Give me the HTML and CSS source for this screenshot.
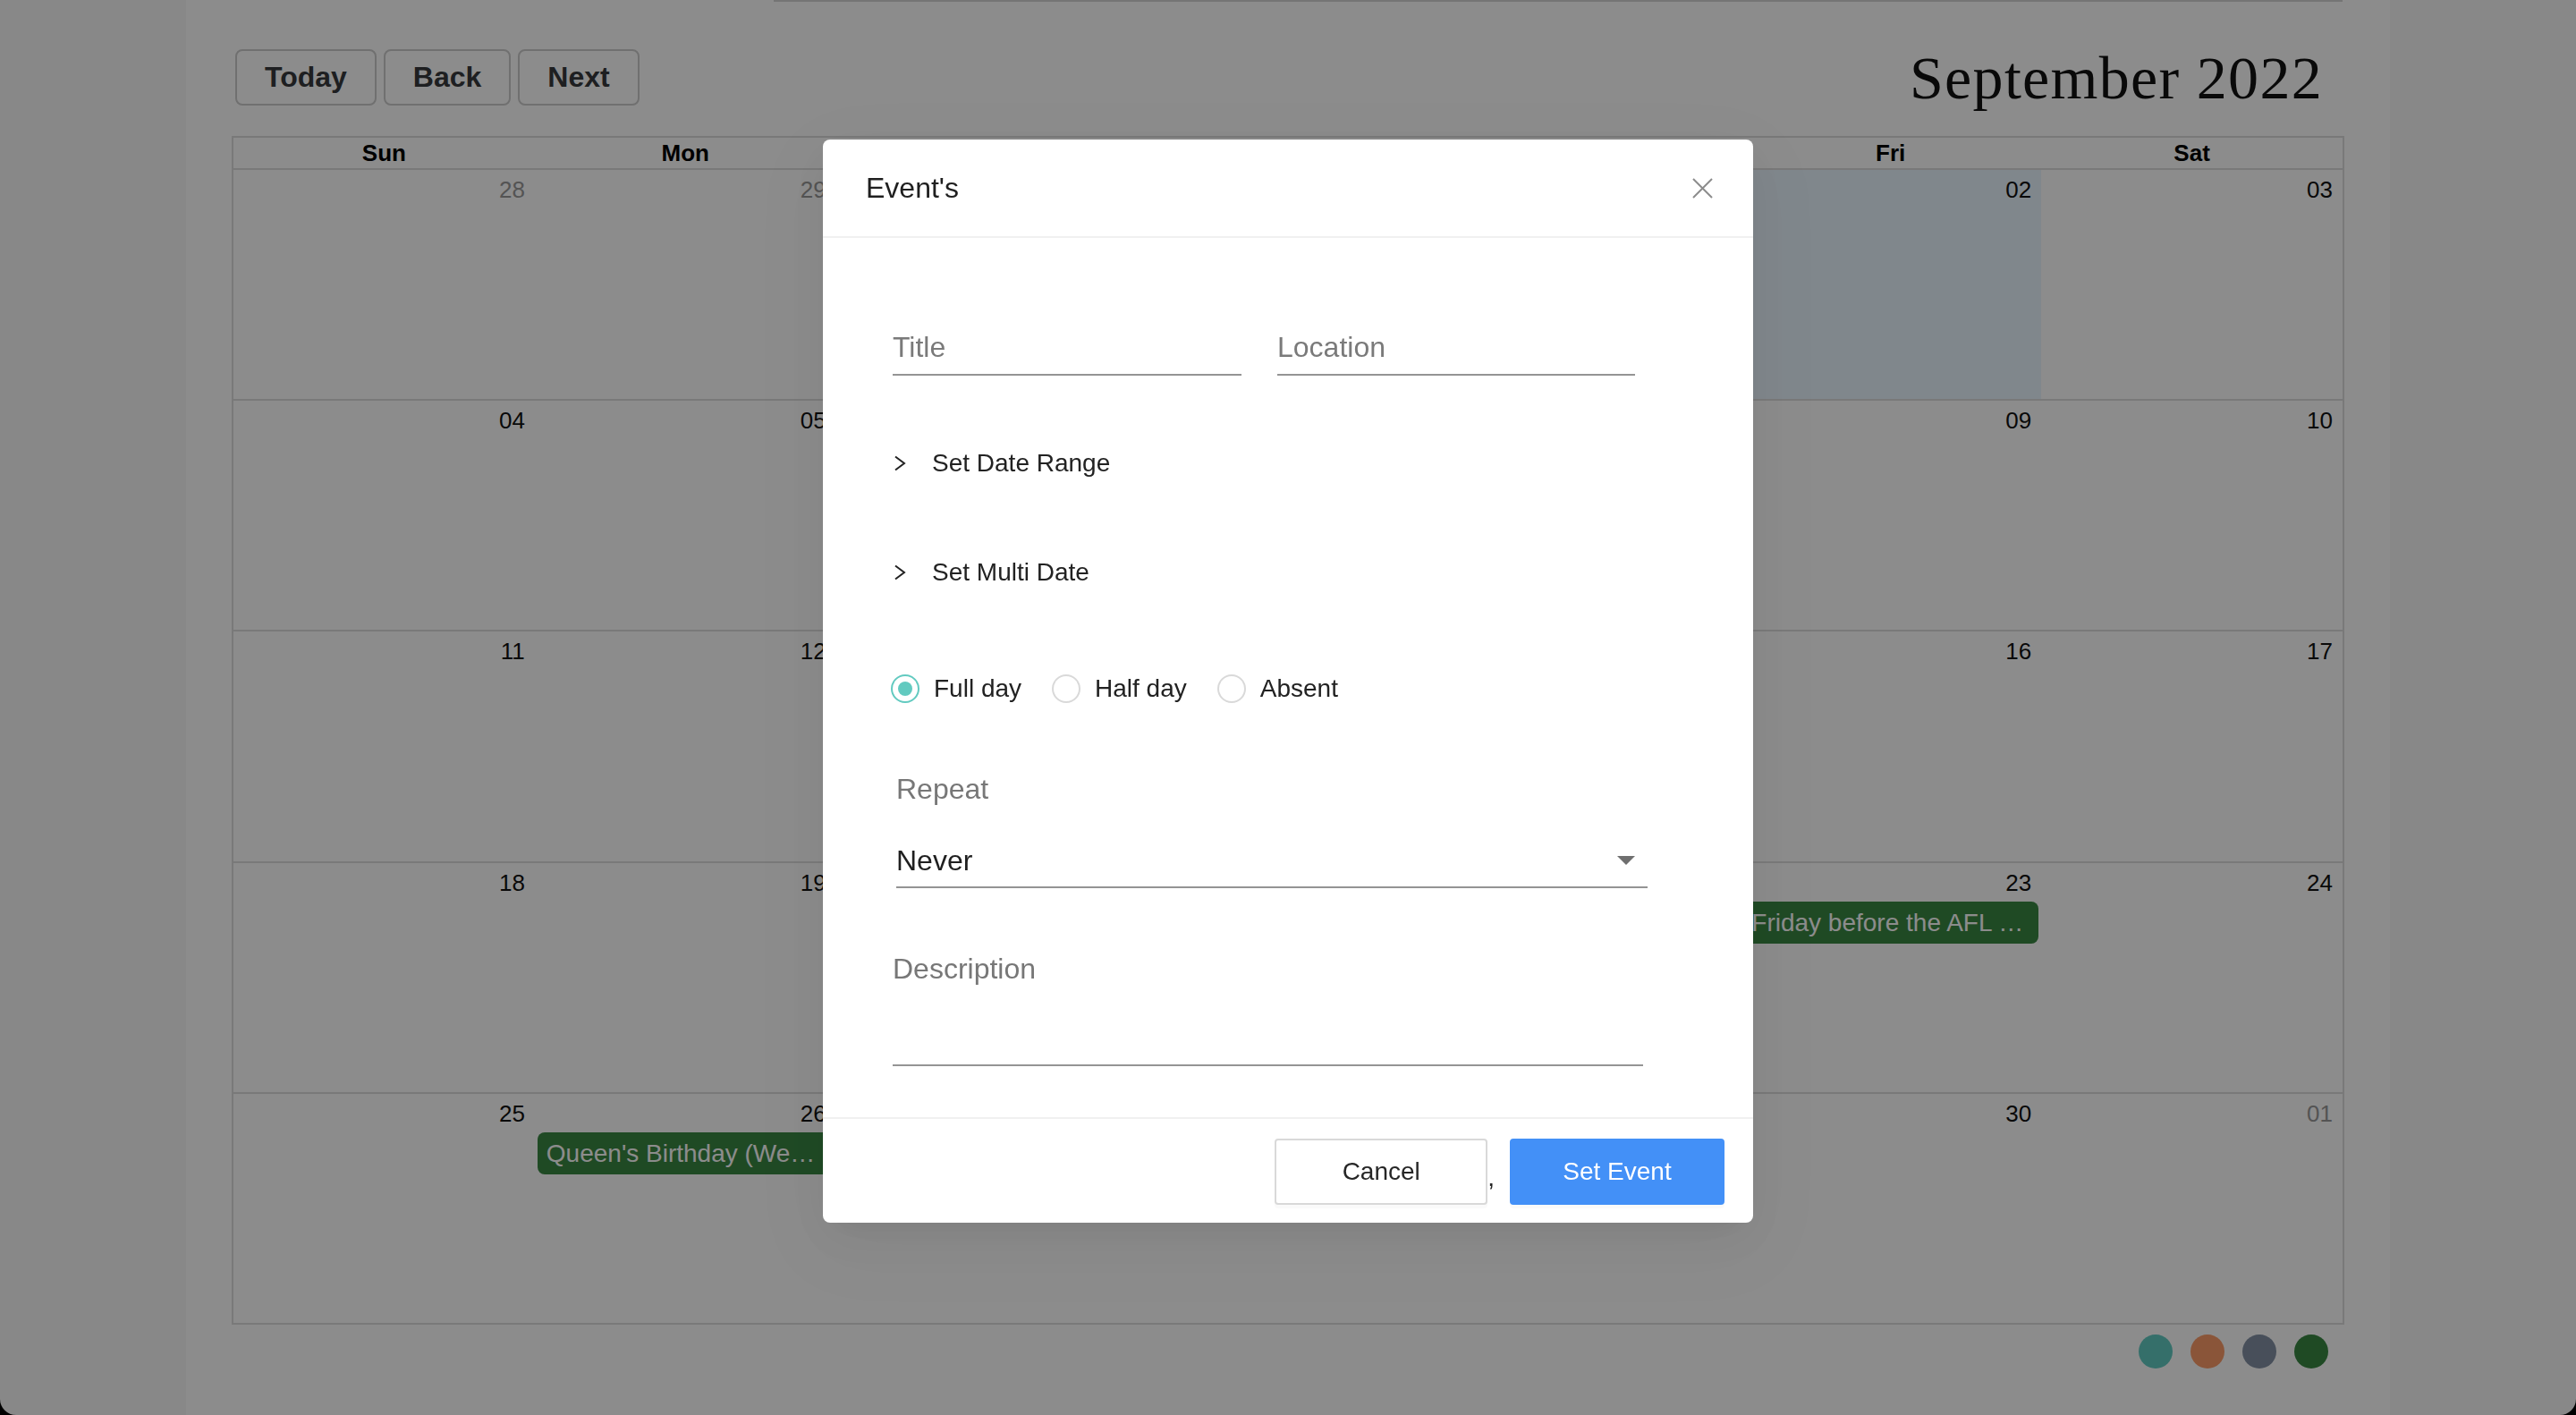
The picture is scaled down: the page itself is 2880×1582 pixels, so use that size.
FILE: index.html
```html
<!DOCTYPE html>
<html lang="en">
<head>
<meta charset="utf-8">
<title>Calendar</title>
<link rel="stylesheet" href="styles.css">
</head>
<body>
<div class="page">
  <main class="main">
    <div class="topline"></div>
    <div class="toolbar">
      <div class="btn-group">
        <button class="tb-btn">Today</button>
        <button class="tb-btn">Back</button>
        <button class="tb-btn">Next</button>
      </div>
      <div class="month-title">September 2022</div>
    </div>

    <div class="calendar">
      <div class="head-row">
        <div class="head-cell">Sun</div>
        <div class="head-cell">Mon</div>
        <div class="head-cell">Tue</div>
        <div class="head-cell">Wed</div>
        <div class="head-cell">Thu</div>
        <div class="head-cell">Fri</div>
        <div class="head-cell">Sat</div>
      </div>
      <div class="weeks">
        <div class="week">
          <span class="today-bg col-6"></span>
          <div class="date off">28</div>
          <div class="date off">29</div>
          <div class="date off">30</div>
          <div class="date off">31</div>
          <div class="date">01</div>
          <div class="date">02</div>
          <div class="date">03</div>
        </div>
        <div class="week">
          <div class="date">04</div>
          <div class="date">05</div>
          <div class="date">06</div>
          <div class="date">07</div>
          <div class="date">08</div>
          <div class="date">09</div>
          <div class="date">10</div>
        </div>
        <div class="week">
          <div class="date">11</div>
          <div class="date">12</div>
          <div class="date">13</div>
          <div class="date">14</div>
          <div class="date">15</div>
          <div class="date">16</div>
          <div class="date">17</div>
        </div>
        <div class="week">
          <div class="date">18</div>
          <div class="date">19</div>
          <div class="date">20</div>
          <div class="date">21</div>
          <div class="date">22</div>
          <div class="date">23</div>
          <div class="date">24</div>
          <span class="event col-6">Friday before the AFL Grand Final</span>
        </div>
        <div class="week">
          <div class="date">25</div>
          <div class="date">26</div>
          <div class="date">27</div>
          <div class="date">28</div>
          <div class="date">29</div>
          <div class="date">30</div>
          <div class="date off">01</div>
          <span class="event col-2">Queen's Birthday (Western Australia)</span>
        </div>
      </div>
    </div>

    <div class="legend">
      <span class="dot dot-teal"></span>
      <span class="dot dot-orange"></span>
      <span class="dot dot-slate"></span>
      <span class="dot dot-green"></span>
    </div>
  </main>
</div>

<div class="overlay">
  <div class="modal">
    <div class="modal-header">
      <div class="modal-title">Event's</div>
      <svg class="modal-close" width="23" height="23" viewBox="0 0 23 23">
        <path d="M1 1 L22 22 M22 1 L1 22" stroke="#8c8c8c" stroke-width="2" fill="none"/>
      </svg>
    </div>
    <div class="modal-body">
      <div class="fields-row">
        <div class="field field-title"><span class="placeholder">Title</span></div>
        <div class="field field-location"><span class="placeholder">Location</span></div>
      </div>

      <div class="accordion acc-first">
        <svg class="chevron" width="14" height="18" viewBox="0 0 14 18">
          <polyline points="2,1.5 12,9 2,16.5" fill="none" stroke="#222" stroke-width="2"/>
        </svg>
        <span class="acc-text">Set Date Range</span>
      </div>
      <div class="accordion acc-second">
        <svg class="chevron" width="14" height="18" viewBox="0 0 14 18">
          <polyline points="2,1.5 12,9 2,16.5" fill="none" stroke="#222" stroke-width="2"/>
        </svg>
        <span class="acc-text">Set Multi Date</span>
      </div>

      <div class="radio-row">
        <label class="radio"><span class="radio-circle checked"><span class="radio-dot"></span></span><span class="radio-label">Full day</span></label>
        <label class="radio"><span class="radio-circle"></span><span class="radio-label">Half day</span></label>
        <label class="radio"><span class="radio-circle"></span><span class="radio-label">Absent</span></label>
      </div>

      <div class="repeat">
        <div class="field-label">Repeat</div>
        <div class="select">
          <span class="select-value">Never</span>
          <svg class="select-arrow" width="20" height="10" viewBox="0 0 20 10">
            <path d="M0 0 L20 0 L10 10 Z" fill="#6f6f6f"/>
          </svg>
        </div>
      </div>

      <div class="description">
        <div class="field-label">Description</div>
        <div class="textarea"></div>
      </div>
    </div>
    <div class="modal-footer">
      <button class="btn btn-cancel">Cancel</button><span class="comma">,</span><button class="btn btn-primary">Set Event</button>
    </div>
  </div>
</div>
</body>
</html>
```

FILE: styles.css
```css
html {
  background: #000;
}
body {
  margin: 0;
  font-family: "Liberation Sans", Arial, Helvetica, sans-serif;
}
.page {
  height: 1582px;
  background: #f8f8f8;
  border-radius: 0 0 18px 18px;
  overflow: hidden;
}
.main {
  width: 2464px;
  height: 1582px;
  margin: 0 auto;
  background: #fff;
  padding: 0 51px;
  box-sizing: border-box;
}
.topline {
  margin-left: 606px;
  width: 1754px;
  height: 2px;
  background: #d6d6d6;
}

/* toolbar */
.toolbar {
  margin-top: 53px;
  height: 63px;
  display: flex;
  align-items: center;
  justify-content: space-between;
}
.btn-group {
  display: flex;
  gap: 8px;
  margin-left: 4px;
}
.tb-btn {
  height: 63px;
  padding: 0 31px;
  border: 2px solid #ccc;
  border-radius: 8px;
  background: #fff;
  color: #373a3c;
  font-family: "Liberation Sans", Arial, sans-serif;
  font-weight: bold;
  font-size: 32px;
}
.month-title {
  margin-right: 24px;
  font-family: "Liberation Serif", "Times New Roman", serif;
  font-size: 68px;
  letter-spacing: 1.3px;
  color: #111;
  line-height: 1;
}

/* calendar */
.calendar {
  margin-top: 34px;
  height: 1329px;
  border: 2px solid #ddd;
  box-sizing: border-box;
  display: flex;
  flex-direction: column;
}
.head-row {
  display: grid;
  grid-template-columns: repeat(7, 1fr);
  height: 34px;
  border-bottom: 2px solid #ddd;
}
.head-cell {
  text-align: center;
  font-weight: bold;
  font-size: 26px;
  line-height: 34px;
  color: #000;
}
.weeks {
  flex: 1;
  display: flex;
  flex-direction: column;
}
.week {
  flex: 1;
  display: grid;
  grid-template-columns: repeat(7, 1fr);
  grid-template-rows: auto auto 1fr;
  border-bottom: 2px solid #ddd;
}
.week:last-child {
  border-bottom: none;
}
.week > div:nth-of-type(1) { grid-column: 1; }
.week > div:nth-of-type(2) { grid-column: 2; }
.week > div:nth-of-type(3) { grid-column: 3; }
.week > div:nth-of-type(4) { grid-column: 4; }
.week > div:nth-of-type(5) { grid-column: 5; }
.week > div:nth-of-type(6) { grid-column: 6; }
.week > div:nth-of-type(7) { grid-column: 7; }
.date {
  grid-row: 1;
  padding: 7px 11px 0 0;
  text-align: right;
  font-size: 26px;
  line-height: 30px;
  color: #111;
  position: relative;
}
.date.off {
  color: #999;
}
.today-bg {
  grid-row: 1 / 4;
  background: #eaf6ff;
}
.col-2 { grid-column: 2; }
.col-6 { grid-column: 6; }
.event {
  grid-row: 2;
  margin: 6px 3px 0;
  height: 47px;
  line-height: 47px;
  padding: 0 10px;
  border-radius: 8px;
  background: #398743;
  color: #fff;
  font-size: 28px;
  white-space: nowrap;
  overflow: hidden;
  text-overflow: ellipsis;
}

/* legend */
.legend {
  margin-top: 11px;
  display: flex;
  justify-content: flex-end;
  gap: 20px;
  padding-right: 18px;
}
.dot {
  width: 38px;
  height: 38px;
  border-radius: 50%;
}
.dot-teal { background: #61cac2; }
.dot-orange { background: #fb9c68; }
.dot-slate { background: #8391a5; }
.dot-green { background: #398743; }

/* overlay + modal */
.overlay {
  position: fixed;
  inset: 0;
  background: rgba(0, 0, 0, 0.45);
  display: flex;
  justify-content: center;
  align-items: flex-start;
  padding-top: 156px;
  box-sizing: border-box;
}
.modal {
  width: 1040px;
  background: #fff;
  border-radius: 8px;
  box-shadow: 0 12px 32px -16px rgba(0,0,0,0.08), 0 18px 56px 0 rgba(0,0,0,0.05), 0 24px 96px 32px rgba(0,0,0,0.03);
  color: #222;
}
.modal-header {
  position: relative;
  padding: 32px 48px;
  border-bottom: 2px solid #f0f0f0;
}
.modal-title {
  font-size: 32px;
  line-height: 44px;
  color: #1f1f1f;
}
.modal-close {
  position: absolute;
  right: 45px;
  top: 43px;
}
.modal-body {
  padding: 48px 48px 57px 78px;
}
.fields-row {
  margin-top: 47px;
  display: flex;
  gap: 40px;
}
.field {
  padding: 8px 0 11px;
  border-bottom: 2px solid #949494;
  font-size: 32px;
  line-height: 38px;
}
.field-title { width: 390px; }
.field-location { width: 400px; }
.placeholder {
  color: #7a7a7a;
}
.accordion {
  height: 96px;
  display: flex;
  align-items: center;
  gap: 29px;
  padding-left: 1px;
}
.acc-first { margin-top: 50px; }
.acc-second { margin-top: 26px; }
.acc-text {
  font-size: 28px;
  color: #222;
}
.radio-row {
  margin-top: 60px;
  height: 44px;
  display: flex;
  align-items: center;
  margin-left: -2px;
}
.radio {
  display: flex;
  align-items: center;
  margin-right: 18px;
}
.radio-circle {
  width: 32px;
  height: 32px;
  box-sizing: border-box;
  border: 2px solid #d9d9d9;
  border-radius: 50%;
  display: flex;
  align-items: center;
  justify-content: center;
}
.radio-circle.checked {
  border-color: #62cac0;
}
.radio-dot {
  width: 16px;
  height: 16px;
  border-radius: 50%;
  background: #62cac0;
}
.radio-label {
  padding: 0 16px;
  font-size: 28px;
  color: #222;
}
.repeat {
  margin-top: 71px;
  margin-left: 4px;
  width: 840px;
}
.field-label {
  font-size: 32px;
  line-height: 38px;
  color: #777;
}
.select {
  margin-top: 42px;
  display: flex;
  align-items: center;
  height: 38px;
  padding-bottom: 10px;
  border-bottom: 2px solid #949494;
}
.select-value {
  font-size: 32px;
  line-height: 38px;
  color: #1f1f1f;
}
.select-arrow {
  margin-left: auto;
  margin-right: 14px;
}
.description {
  margin-top: 71px;
  width: 839px;
}
.textarea {
  height: 88px;
  border-bottom: 2px solid #949494;
}
.modal-footer {
  border-top: 2px solid #f0f0f0;
  padding: 22px 32px 20px;
  display: flex;
  justify-content: flex-end;
  align-items: center;
}
.btn {
  height: 74px;
  border-radius: 4px;
  font-family: "Liberation Sans", Arial, sans-serif;
  font-size: 28px;
  box-shadow: 0 4px 0 rgba(0,0,0,0.02);
}
.btn-cancel {
  width: 238px;
  border: 2px solid #d9d9d9;
  background: #fff;
  color: #262626;
}
.comma {
  font-size: 28px;
  color: #262626;
  align-self: center;
  line-height: 32px;
  margin-top: 14px;
}
.btn-primary {
  margin-left: 17px;
  width: 240px;
  border: 2px solid #4390f7;
  background: #4390f7;
  color: #fff;
}
```
